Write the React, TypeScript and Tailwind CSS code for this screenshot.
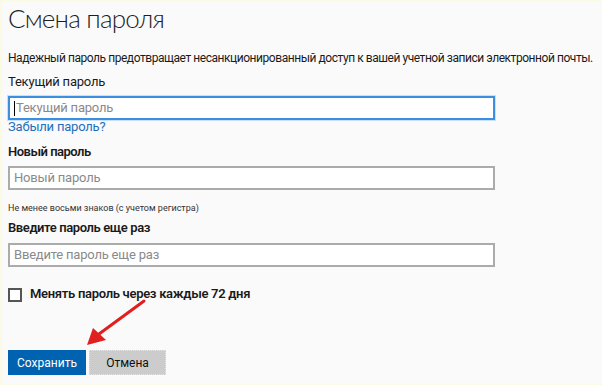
import React from "react";

const font = { fontFamily: 'Roboto, "Noto Sans", sans-serif' };

function Field({ placeholder, focused }: { placeholder: string; focused?: boolean }) {
  return (
    <div
      className={
        focused
          ? "flex h-[24px] w-[487px] items-center border-2 border-[#3a8fe0] bg-white pl-[4px] shadow-[0_0_0_1px_rgba(58,143,224,0.25)]"
          : "flex h-[24px] w-[487px] items-center border-2 border-[#ababab] bg-white pl-[4px]"
      }
    >
      {focused && <span className="mr-[1px] h-[15px] w-px bg-black" />}
      <span className="text-[13px] tracking-[-0.2px] text-[#8a8a8a]">{placeholder}</span>
    </div>
  );
}

export default function App() {
  return (
    <div
      style={font}
      className="relative h-[385px] w-[602px] overflow-hidden border-t border-r border-b border-l-2 border-[#fbfbe4] bg-[#fafafa] text-[#1a1a1a]"
    >
      <div className="flex flex-col pl-[6px]">
        <h1 className="font-['Lato',Roboto,sans-serif] text-[26px] font-light leading-[34px] tracking-[-0.8px] text-[#1e1e1e]">
          Смена пароля
        </h1>
        <p className="mt-[15px] whitespace-nowrap text-[12px] leading-[16px] tracking-[-0.45px]">
          Надежный пароль предотвращает несанкционированный доступ к вашей учетной записи электронной почты.
        </p>
        <div className="mt-[8px] text-[13px] leading-[16px] tracking-[-0.2px]">Текущий пароль</div>
        <div className="mt-[6px]">
          <Field placeholder="Текущий пароль" focused />
        </div>
        <a className="text-[13px] leading-[14px] tracking-[-0.2px] text-[#1f6fbf]">Забыли пароль?</a>
        <div className="mt-[10px] text-[13px] font-semibold leading-[16px] tracking-[-0.5px]">Новый пароль</div>
        <div className="mt-[6px]">
          <Field placeholder="Новый пароль" />
        </div>
        <div className="mt-[12px] text-[9px] leading-[12px] text-[#333]">
          Не менее восьми знаков (с учетом регистра)
        </div>
        <div className="mt-[6px] text-[13px] font-semibold leading-[16px] tracking-[-0.4px]">Введите пароль еще раз</div>
        <div className="mt-[7px]">
          <Field placeholder="Введите пароль еще раз" />
        </div>
        <label className="mt-[19px] flex items-start gap-[8px]">
          <span className="mt-[2px] h-[14px] w-[14px] border-2 border-[#555] bg-white" />
          <span className="text-[13px] font-semibold leading-[16px] tracking-[-0.3px]">
            Менять пароль через каждые 72 дня
          </span>
        </label>
        <div className="mt-[48px] flex gap-[3px]">
          <button className="flex h-[25px] w-[78px] items-center justify-center bg-[#0063b1] text-[12px] text-white">
            Сохранить
          </button>
          <button className="flex h-[25px] w-[77px] items-center justify-center border border-dotted border-[#e5e5e5] bg-[#cccccc] text-[12px] text-[#111]">
            Отмена
          </button>
        </div>
      </div>
      <svg className="absolute left-0 top-0" width="602" height="385" viewBox="0 0 602 385">
        <line x1="142" y1="300" x2="97" y2="333" stroke="#e0201f" strokeWidth="3" strokeLinecap="round" />
        <polygon points="85,344 91,327 104,339" fill="#e0201f" />
      </svg>
    </div>
  );
}
